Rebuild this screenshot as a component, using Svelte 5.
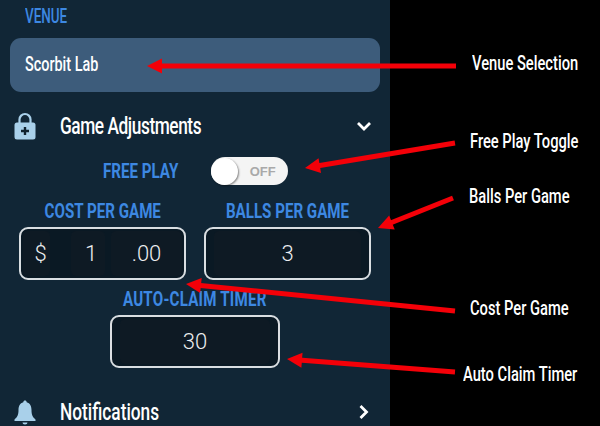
<script>
    const arrows = [
        { from: [456, 66], to: [147, 66] },
        { from: [455, 143], to: [305, 168] },
        { from: [453, 198], to: [378, 228] },
        { from: [455, 311], to: [186, 284] },
        { from: [455, 372], to: [287, 359] }
    ];

    const callouts = [
        { text: "Venue Selection", x: 472, y: 52 },
        { text: "Free Play Toggle", x: 470, y: 130 },
        { text: "Balls Per Game", x: 469, y: 185 },
        { text: "Cost Per Game", x: 470, y: 297 },
        { text: "Auto Claim Timer", x: 463, y: 363 }
    ];

    // shaft and head of one arrow, head is 15 long and 15 wide
    function shaft(a) {
        const [x1, y1] = a.from;
        const [x2, y2] = a.to;
        const len = Math.hypot(x2 - x1, y2 - y1);
        const ux = (x2 - x1) / len;
        const uy = (y2 - y1) / len;
        return { x1, y1, x2: x2 - ux * 12, y2: y2 - uy * 12 };
    }

    function head(a) {
        const [x1, y1] = a.from;
        const [x2, y2] = a.to;
        const len = Math.hypot(x2 - x1, y2 - y1);
        const ux = (x2 - x1) / len;
        const uy = (y2 - y1) / len;
        const bx = x2 - ux * 15;
        const by = y2 - uy * 15;
        return `${x2},${y2} ${bx - uy * 7.5},${by + ux * 7.5} ${bx + uy * 7.5},${by - ux * 7.5}`;
    }
</script>

<div class="page">
    <div class="panel">
        <div class="venue-label"><span class="narrow">VENUE</span></div>
        <div class="venue-box"><span class="narrow">Scorbit Lab</span></div>

        <div class="row game-row">
            <svg class="row-icon" width="22" height="28" viewBox="0 0 22 28">
                <path d="M5.500 12V7.500a5.500 5.500 0 0 1 11 0V12" fill="none" stroke="#a9d0ea" stroke-width="2.2" />
                <rect x="0.5" y="10.500" width="21" height="17" rx="2.500" fill="#a9d0ea" />
                <path d="M11 15v8M7 19h8" stroke="#10222f" stroke-width="2.400" />
            </svg>
            <span class="row-title tight"><span class="narrow">Game Adjustments</span></span>
            <svg class="chevron" width="16" height="10" viewBox="0 0 16 10">
                <path d="M2 2l6 6 6-6" fill="none" stroke="#fff" stroke-width="2.800" />
            </svg>
        </div>

        <div class="free-play">
            <span class="field-label"><span class="narrow">FREE PLAY</span></span>
            <div class="toggle">
                <span class="knob"></span>
                <span class="toggle-text">OFF</span>
            </div>
        </div>

        <div class="fields">
            <div class="field">
                <div class="field-label"><span class="narrow center">COST PER GAME</span></div>
                <div class="input cost">
                    <span class="seg seg-dollar">$</span>
                    <span class="seg seg-whole">1</span>
                    <span class="seg seg-cents">.00</span>
                </div>
            </div>
            <div class="field">
                <div class="field-label"><span class="narrow center">BALLS PER GAME</span></div>
                <div class="input single"><span class="seg seg-fill">3</span></div>
            </div>
        </div>

        <div class="field timer">
            <div class="field-label"><span class="narrow center">AUTO-CLAIM TIMER</span></div>
            <div class="input single"><span class="seg seg-fill">30</span></div>
        </div>

        <div class="row notif-row">
            <svg class="row-icon" width="22" height="26" viewBox="0 0 22 26">
                <path d="M11 1.500c1 0 1.600.7 1.700 1.700C16 4 17.500 7 17.500 11c0 5 1.200 7 4 9.500V22H.5v-1.500c2.800-2.500 4-4.500 4-9.500 0-4 1.500-7 4.800-7.800.1-1 .7-1.700 1.700-1.700z" fill="#a9d0ea" />
                <path d="M8.500 23.500h5a2.500 2 0 0 1-5 0z" fill="#a9d0ea" />
            </svg>
            <span class="row-title"><span class="narrow">Notifications</span></span>
            <svg class="chevron" width="16" height="16" viewBox="0 0 16 16">
                <path d="M4.500 2l6 6-6 6" fill="none" stroke="#fff" stroke-width="2.800" />
            </svg>
        </div>
    </div>

    <div class="side"></div>

    <svg class="arrows" width="600" height="426" viewBox="0 0 600 426">
        {#each arrows as a}
            {@const s = shaft(a)}
            <line x1={s.x1} y1={s.y1} x2={s.x2} y2={s.y2} stroke="#f40008" stroke-width="5" />
            <polygon points={head(a)} fill="#f40008" />
        {/each}
    </svg>

    {#each callouts as c}
        <div class="callout" style="left: {c.x}px; top: {c.y}px"><span class="narrow">{c.text}</span></div>
    {/each}
</div>

<style>
    :global(body) {
        margin: 0;
        background: #000;
    }

    .page {
        position: relative;
        display: flex;
        width: 600px;
        height: 426px;
        overflow: hidden;
        font-family: "Roboto", sans-serif;
    }

    /* no condensed face is installed, so squeeze the regular one */
    .narrow {
        display: inline-block;
        flex: none;
        transform: scaleX(0.72);
        transform-origin: left center;
        white-space: nowrap;
    }

    .narrow.center {
        transform-origin: center;
    }

    .panel {
        width: 390px;
        height: 426px;
        flex: none;
        background: #112636;
        overflow: hidden;
    }

    .side {
        flex: 1;
        background: #000;
    }

    .venue-label {
        height: 38px;
        padding: 5px 0 0 25px;
        box-sizing: border-box;
        font-size: 21px;
        font-weight: 500;
        line-height: 23px;
        color: #3d88e2;
    }

    .venue-label .narrow {
        transform: scaleX(0.64);
    }

    .venue-box {
        display: flex;
        align-items: center;
        height: 52px;
        margin: 0 10px;
        padding: 0 0 2px 15px;
        border-radius: 11px;
        background: #3d5c7b;
        color: #fff;
        font-size: 20px;
        font-weight: 500;
    }

    .row {
        display: flex;
        align-items: center;
        height: 40px;
        padding: 0 18px 0 14px;
    }

    .game-row {
        margin-top: 14px;
    }

    .row-icon {
        flex: none;
    }

    .row-title {
        flex: 1;
        margin-left: 24px;
        color: #fff;
        font-size: 24px;
        font-weight: 500;
    }

    .tight {
        letter-spacing: -0.6px;
    }

    .chevron {
        flex: none;
    }

    .free-play {
        display: flex;
        align-items: center;
        gap: 3px;
        height: 28px;
        margin-top: 11px;
        padding-left: 103px;
    }

    .field-label {
        display: flex;
        justify-content: center;
        height: 21px;
        color: #3d88e2;
        font-size: 21px;
        font-weight: 700;
        line-height: 21px;
        white-space: nowrap;
    }

    .toggle {
        display: flex;
        align-items: center;
        justify-content: space-between;
        width: 77px;
        height: 28px;
        padding-right: 12px;
        box-sizing: border-box;
        border-radius: 14px;
        background: #f4f4f4;
    }

    .knob {
        width: 27px;
        height: 27px;
        border-radius: 50%;
        background: #fff;
        box-shadow: 1px 1px 2px rgba(0, 0, 0, 0.45);
    }

    .toggle-text {
        color: #a9a9a9;
        font-family: "Liberation Sans", sans-serif;
        font-size: 13px;
        font-weight: 700;
    }

    .fields {
        display: grid;
        grid-template-columns: 167px 167px;
        gap: 18px;
        margin: 16px 0 0 19px;
    }

    .input {
        display: flex;
        height: 53px;
        margin-top: 5px;
        padding: 2px;
        box-sizing: border-box;
        border: 2px solid #d9dee2;
        border-radius: 9px;
        background: #0a1924;
        color: #eceef0;
        font-size: 22px;
        font-weight: 300;
        gap: 6px;
    }

    .seg {
        display: flex;
        align-items: center;
        justify-content: center;
        border-radius: 5px;
        background: #0e1a24;
    }

    .seg-dollar {
        width: 27px;
        padding-left: 8px;
        box-sizing: border-box;
    }

    .seg-whole {
        width: 34px;
        margin-left: 15px;
        padding-left: 6px;
        box-sizing: border-box;
    }

    .seg-cents {
        flex: 1;
    }

    .single {
        padding: 2px 8px;
    }

    .seg-fill {
        flex: 1;
    }

    .timer {
        width: 170px;
        margin: 9px auto 0;
    }

    .timer .narrow {
        letter-spacing: 0.3px;
    }

    .notif-row {
        margin-top: 24px;
    }

    .arrows {
        position: absolute;
        left: 0;
        top: 0;
        pointer-events: none;
    }

    .callout {
        position: absolute;
        color: #fff;
        font-size: 21px;
        font-weight: 500;
        line-height: 22px;
        white-space: nowrap;
    }

    .callout .narrow {
        transform: scaleX(0.7);
    }
</style>
